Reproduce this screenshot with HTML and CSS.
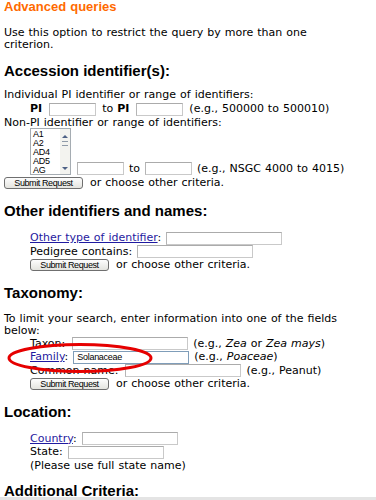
FILE: index.html
```html
<!DOCTYPE html>
<html>
<head>
    <title>Advanced queries</title>
    <meta charset="utf-8">
    <link rel="stylesheet" href="styles.css">
</head>
<body>
    <!-- title -->
    <h1 class="page-title">Advanced queries</h1>
    <p class="intro">Use this option to restrict the query by more than one criterion.</p>

    <!-- accession -->
    <h2 class="section first">Accession identifier(s):</h2>
    <div class="text-line">Individual PI identifier or range of identifiers:</div>
    <div class="line pi-row indent">
        <b>PI</b> <input class="box w46 pi-box" type="text"> to <b>PI</b> <input class="box w46 pi-box" type="text"> (e.g., 500000 to 500010)
    </div>
    <div class="text-line">Non-PI identifier or range of identifiers:</div>
    <div class="list-row indent">
        <div class="listbox">
            <div class="options">
                <div>A1</div>
                <div>A2</div>
                <div>AD4</div>
                <div>AD5</div>
                <div>AG</div>
            </div>
            <div class="scroll">
                <span class="arrow up"></span>
                <span class="thumb"></span>
                <span class="arrow down"></span>
            </div>
        </div>
        <span class="list-fields"><input class="box w46" type="text"> to <input class="box w46" type="text"> (e.g., NSGC 4000 to 4015)</span>
    </div>
    <div class="line btn-row"><button class="submit">Submit Request</button> or choose other criteria.</div>

    <!-- other identifiers -->
    <h2 class="section">Other identifiers and names:</h2>
    <div class="block">
        <div class="line"><a href="#">Other type of identifier</a>: <input class="box w115" type="text"></div>
        <div class="line">Pedigree contains: <input class="box w115" type="text"></div>
        <div class="line"><button class="submit">Submit Request</button> or choose other criteria.</div>
    </div>

    <!-- taxonomy -->
    <h2 class="section">Taxonomy:</h2>
    <p class="intro tight">To limit your search, enter information into one of the fields below:</p>
    <div class="block">
        <div class="line">Taxon: <input class="box w115 nudge" type="text"> (e.g., <i>Zea</i> or <i>Zea mays</i>)</div>
        <div class="line marked">
            <a href="#">Family</a>: <input class="box w115 filled" type="text" value="Solanaceae"> (e.g., <i>Poaceae</i>)
            <svg class="ring" width="148" height="32" viewBox="0 0 148 32">
                <ellipse cx="73" cy="16" rx="71" ry="13.5" fill="none" stroke="#e60000" stroke-width="3"/>
            </svg>
        </div>
        <div class="line">Common name: <input class="box w115 nudge" type="text"> (e.g., Peanut)</div>
        <div class="line"><button class="submit">Submit Request</button> or choose other criteria.</div>
    </div>

    <!-- location -->
    <h2 class="section">Location:</h2>
    <div class="block">
        <div class="line"><a href="#">Country</a>: <input class="box w95" type="text"></div>
        <div class="line">State: <input class="box w95" type="text"></div>
        <div class="line">(Please use full state name)</div>
    </div>

    <h2 class="section last">Additional Criteria:</h2>
    <div class="rule"></div>
</body>
</html>
```

FILE: styles.css
```css
body, html {
    margin: 0;
    padding: 0;
}

body {
    padding: 0 4px;
    font-family: 'DejaVu Sans', Verdana, sans-serif;
    font-size: 11px;
    line-height: 13px;
    word-spacing: 0.5px;
    color: #000;
    background: #fff;
}

a {
    color: #1f1aa0;
}

b {
    font-weight: bold;
}

.page-title {
    margin: 0;
    font-family: 'Liberation Sans', Arial, sans-serif;
    font-size: 13px;
    line-height: 14px;
    color: #ff6a00;
}

.intro {
    margin: 13px 0 0;
    width: 345px;
    line-height: 12px;
}

.intro.tight {
    margin-top: 11px;
}

.section {
    margin: 12px 0 11px;
    font-family: 'Liberation Sans', Arial, sans-serif;
    font-size: 15px;
    line-height: 18px;
    word-spacing: 0;
}

.section.first {
    margin-top: 11px;
    margin-bottom: 8px;
}

.section.last {
    margin-top: 10px;
    margin-bottom: 0;
}

.text-line {
    height: 13px;
    white-space: nowrap;
}

.line {
    height: 13.5px;
    line-height: 13.5px;
    white-space: nowrap;
}

.pi-row {
    height: 15px;
    line-height: 15px;
}

.indent {
    padding-left: 26px;
}

.block {
    padding-left: 26px;
}

.box {
    box-sizing: border-box;
    height: 13px;
    margin: 0 1px;
    padding: 0 2px;
    border: 1px solid #c9c9c9;
    border-top-color: #ababab;
    border-left-color: #b5b5b5;
    vertical-align: middle;
    font-family: 'Liberation Sans', Arial, sans-serif;
    font-size: 9px;
    color: #000;
    background: #fff;
}

.w46 { width: 47px; }
.w95 { width: 96px; }
.w115 { width: 116px; }

.pi-box {
    margin: 0 2px 0 3px;
}

.nudge {
    margin-left: 3px;
}

.filled {
    border-color: #7f9db9;
    padding-left: 3px;
    letter-spacing: -0.3px;
}

.list-row {
    display: flex;
    align-items: flex-end;
    margin-top: -1px;
    height: 47px;
    white-space: nowrap;
}

.list-fields {
    line-height: 13px;
}

.listbox {
    display: flex;
    width: 41px;
    height: 47px;
    box-sizing: border-box;
    border: 1px solid #a5acb2;
    margin-right: 5px;
}

.options {
    flex: 1;
    padding: 1px 0 0 2px;
    font-family: 'Liberation Sans', Arial, sans-serif;
    font-size: 9px;
    line-height: 9px;
    letter-spacing: -0.3px;
    word-spacing: 0;
}

.scroll {
    width: 10px;
    background: #f3f3ef;
    display: flex;
    flex-direction: column;
    justify-content: space-between;
    align-items: center;
    padding: 6px 0 4px;
}

.arrow {
    width: 0;
    height: 0;
    border-left: 3px solid transparent;
    border-right: 3px solid transparent;
}

.arrow.up {
    border-bottom: 3px solid #4d6185;
}

.arrow.down {
    border-top: 3px solid #4d6185;
}

.thumb {
    width: 6px;
    height: 3px;
    border-top: 1px solid #8f9aa8;
    border-bottom: 1px solid #8f9aa8;
    margin-bottom: 18px;
}

.btn-row {
    height: 14px;
    line-height: 14px;
    margin-top: 1px;
}

.submit {
    box-sizing: border-box;
    width: 79px;
    height: 12px;
    margin: 0 3px 0 0;
    padding: 0;
    border: 1px solid #6f6f6f;
    border-radius: 3px;
    background: linear-gradient(#fdfdfd, #e4e4df);
    font-family: 'Liberation Sans', Arial, sans-serif;
    font-size: 9px;
    line-height: 9px;
    letter-spacing: -0.4px;
    word-spacing: 0;
    color: #000;
    vertical-align: middle;
}

.marked {
    position: relative;
}

.ring {
    position: absolute;
    left: -23px;
    top: -8px;
}

.rule {
    margin: -3px -4px 0;
    border-top: 3px solid #e4e4e4;
}
```
